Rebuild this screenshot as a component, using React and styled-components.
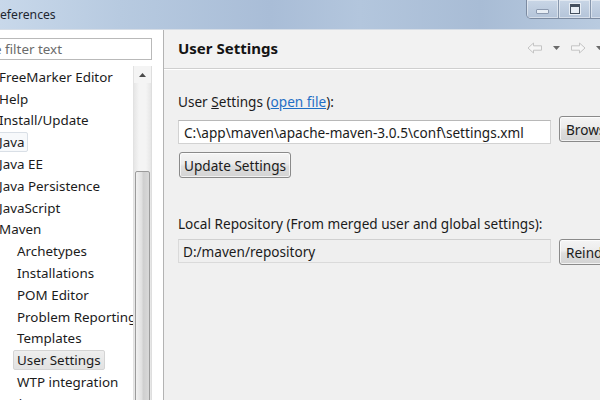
import React from "react";
import styled, { createGlobalStyle } from "styled-components";

const GlobalStyle = createGlobalStyle`
  html, body {
    margin: 0;
    padding: 0;
    overflow: hidden;
  }
  body {
    font-family: "Noto Sans", "Open Sans", sans-serif;
    font-size: 13.6px;
    color: #1b1b1b;
  }
`;

const Window = styled.div`
  width: 600px;
  height: 400px;
  display: flex;
  flex-direction: column;
  overflow: hidden;
  background: #f0f0f0;
`;

const TitleBar = styled.div`
  height: 29px;
  flex: 0 0 29px;
  display: flex;
  align-items: flex-start;
  justify-content: space-between;
  background: linear-gradient(
    90deg,
    #c8d8ea 0%,
    #b7cae0 20%,
    #a9bdd7 45%,
    #b3c6dd 60%,
    #a8bcd5 80%,
    #b9cbe0 100%
  );
  border-bottom: 1px solid #d6dde6;
`;

const Title = styled.span`
  margin-top: 6px;
  font-size: 12.2px;
  color: #1e2630;
`;

const Controls = styled.div`
  display: flex;
  margin-right: -12px;
  height: 18px;
  border: 1px solid #7c8ba1;
  border-top: none;
  border-radius: 0 0 5px 5px;
  overflow: hidden;
  background: linear-gradient(180deg, #c9d6e6 0%, #b4c4d9 100%);
`;

const ControlButton = styled.div`
  width: ${(p) => p.$w}px;
  height: 18px;
  display: flex;
  align-items: center;
  justify-content: center;
  border-left: ${(p) => (p.$first ? "none" : "1px solid #8797ad")};
  box-shadow: inset 0 0 0 1px rgba(255, 255, 255, 0.45);
`;

const MinGlyph = styled.div`
  width: 11px;
  height: 3px;
  margin-top: 4px;
  background: #e8eef5;
  border: 1px solid #8c9ab0;
  border-radius: 1px;
`;

const MaxGlyph = styled.div`
  width: 8px;
  height: 6px;
  border: 1px solid #44505f;
  border-top-width: 3px;
  background: #e8eef5;
  box-shadow: 0 0 0 1px #e8eef5;
`;

const Body = styled.div`
  flex: 1;
  display: flex;
  min-height: 0;
`;

const Sidebar = styled.div`
  width: 163px;
  flex: 0 0 163px;
  background: #ffffff;
  display: flex;
  flex-direction: column;
  padding-top: 8px;
  box-sizing: border-box;
  font-size: 13.4px;
`;

const Filter = styled.div`
  height: 22px;
  margin-left: -3px;
  margin-right: 11px;
  border: 1px solid #b9b9b9;
  box-sizing: border-box;
  display: flex;
  align-items: center;
  overflow: hidden;
  color: #6b6b6b;
  white-space: nowrap;
`;

const FilterText = styled.span`
  margin-left: -4px;
`;

const TreeBox = styled.div`
  flex: 1;
  margin-top: 6px;
  margin-right: 11px;
  display: flex;
  min-height: 0;
  overflow: hidden;
  border-right: 1px solid #dedede;
`;

const TreeList = styled.div`
  flex: 1;
  min-width: 0;
  overflow: hidden;
`;

const Row = styled.div`
  height: 21.8px;
  display: flex;
  align-items: center;
  padding-left: ${(p) => (p.$child ? 13 : 0)}px;
  margin-left: ${(p) => (p.$child ? 0 : -5)}px;
  white-space: nowrap;
`;

const ItemLabel = styled.span`
  display: inline-block;
  height: 20px;
  line-height: 19px;
  padding: 0 3px;
  box-sizing: border-box;
  border: 1px solid
    ${(p) =>
      p.$state === "selected"
        ? "#d4d4d4"
        : p.$state === "focus"
        ? "#d9dfe6"
        : "transparent"};
  border-radius: 2px;
  background: ${(p) =>
    p.$state === "selected"
      ? "linear-gradient(180deg, #eeeeee 0%, #e2e2e2 100%)"
      : p.$state === "focus"
      ? "#f7f9fb"
      : "transparent"};
`;

const Scrollbar = styled.div`
  width: 17px;
  flex: 0 0 17px;
  display: flex;
  flex-direction: column;
  background: linear-gradient(90deg, #e6e6e6 0%, #f4f4f4 30%, #f4f4f4 70%, #e6e6e6 100%);
  border-left: 1px solid #e2e2e2;
`;

const ScrollButton = styled.div`
  height: 17px;
  flex: 0 0 17px;
  display: flex;
  align-items: center;
  justify-content: center;
  background: #f4f4f4;
`;

const ScrollTrack = styled.div`
  flex: 1;
  padding-top: 88px;
  display: flex;
  justify-content: center;
`;

const Thumb = styled.div`
  width: 15px;
  height: 400px;
  border: 1px solid #9b9b9b;
  border-radius: 2px;
  box-sizing: border-box;
  background: linear-gradient(90deg, #f1f1f1 0%, #e0e0e0 45%, #cfcfcf 55%, #d9d9d9 100%);
`;

const Main = styled.div`
  flex: 1;
  min-width: 0;
  display: flex;
  flex-direction: column;
  border-left: 1px solid #b3b3b3;
  overflow: hidden;
`;

const Header = styled.div`
  height: 38px;
  flex: 0 0 38px;
  display: flex;
  align-items: center;
  justify-content: space-between;
  padding-left: 14px;
  background: #f2f2f2;
  border-bottom: 1px solid #cfcfcf;
  box-shadow: 0 1px 0 #ffffff;
`;

const HeaderTitle = styled.span`
  font-weight: bold;
  font-size: 15px;
  color: #141414;
  margin-top: -2px;
`;

const Nav = styled.div`
  display: flex;
  align-items: center;
  gap: 10px;
  margin-right: -3px;
  margin-top: -2px;
`;

const Content = styled.div`
  flex: 1;
  padding: 24px 0 0 14px;
  display: flex;
  flex-direction: column;
  align-items: flex-start;
`;

const Label = styled.div`
  height: 18px;
  line-height: 18px;
  margin-top: ${(p) => p.$gap || 0}px;
  white-space: nowrap;
`;

const Link = styled.span`
  color: #1f6fc5;
  text-decoration: underline;
`;

const Mnemonic = styled.span`
  text-decoration: underline;
`;

const FieldRow = styled.div`
  display: grid;
  grid-template-columns: 373px 90px;
  column-gap: 8px;
  align-items: start;
  margin-top: ${(p) => p.$gap}px;
`;

const TextField = styled.div`
  height: 24px;
  margin-top: ${(p) => p.$offset || 0}px;
  box-sizing: border-box;
  border: 1px solid ${(p) => (p.$readOnly ? "#dadada" : "#d2d2d2")};
  border-top-color: ${(p) => (p.$readOnly ? "#d0d0d0" : "#b8b8b8")};
  background: ${(p) => (p.$readOnly ? "#efefef" : "#ffffff")};
  display: flex;
  align-items: center;
  padding-left: ${(p) => (p.$readOnly ? 4 : 5)}px;
  white-space: nowrap;
  overflow: hidden;
`;

const Button = styled.div`
  height: 26px;
  box-sizing: border-box;
  padding: 0 ${(p) => p.$pad ?? 6}px;
  display: inline-flex;
  align-items: center;
  border: 1px solid #8a8a8a;
  border-radius: 3px;
  background: linear-gradient(180deg, #f4f4f4 0%, #ececec 45%, #dedede 55%, #d3d3d3 100%);
  box-shadow: inset 0 0 0 1px rgba(255, 255, 255, 0.7);
  white-space: nowrap;
  margin-top: ${(p) => p.$gap || 0}px;
  margin-left: ${(p) => p.$indent || 0}px;
`;

const BackArrow = () => (
  <svg width="16" height="12" viewBox="0 0 16 12">
    <path
      d="M1 6 L6.5 1 L6.5 3.8 L14.5 3.8 L14.5 8.2 L6.5 8.2 L6.5 11 Z"
      fill="#f6f6f6"
      stroke="#c4c4c4"
      strokeWidth="1"
      strokeLinejoin="round"
    />
  </svg>
);

const ForwardArrow = () => (
  <svg width="16" height="12" viewBox="0 0 16 12">
    <path
      d="M15 6 L9.5 1 L9.5 3.8 L1.5 3.8 L1.5 8.2 L9.5 8.2 L9.5 11 Z"
      fill="#f6f6f6"
      stroke="#c4c4c4"
      strokeWidth="1"
      strokeLinejoin="round"
    />
  </svg>
);

const DropTriangle = () => (
  <svg width="7" height="4" viewBox="0 0 7 4">
    <path d="M0 0 L7 0 L3.5 4 Z" fill="#6a6a6a" />
  </svg>
);

const UpTriangle = () => (
  <svg width="7" height="4" viewBox="0 0 7 4">
    <path d="M0 4 L7 4 L3.5 0 Z" fill="#4a4a4a" />
  </svg>
);

const treeItems = [
  { label: "FreeMarker Editor" },
  { label: "Help" },
  { label: "Install/Update" },
  { label: "Java", state: "focus" },
  { label: "Java EE" },
  { label: "Java Persistence" },
  { label: "JavaScript" },
  { label: "Maven" },
  { label: "Archetypes", child: true },
  { label: "Installations", child: true },
  { label: "POM Editor", child: true },
  { label: "Problem Reporting", child: true },
  { label: "Templates", child: true },
  { label: "User Settings", child: true, state: "selected" },
  { label: "WTP integration", child: true },
  { label: "Web" },
];

const App = () => {
  return (
    <Window>
      <GlobalStyle />
      <TitleBar>
        <Title>eferences</Title>
        <Controls>
          <ControlButton $w={31} $first>
            <MinGlyph />
          </ControlButton>
          <ControlButton $w={31}>
            <MaxGlyph />
          </ControlButton>
          <ControlButton $w={20} />
        </Controls>
      </TitleBar>

      <Body>
        {/* Preference tree */}
        <Sidebar>
          <Filter>
            <FilterText>e filter text</FilterText>
          </Filter>
          <TreeBox>
            <TreeList>
              {treeItems.map((item, index) => (
                <Row key={index} $child={item.child}>
                  <ItemLabel $state={item.state}>{item.label}</ItemLabel>
                </Row>
              ))}
            </TreeList>
            <Scrollbar>
              <ScrollButton>
                <UpTriangle />
              </ScrollButton>
              <ScrollTrack>
                <Thumb />
              </ScrollTrack>
            </Scrollbar>
          </TreeBox>
        </Sidebar>

        {/* Settings page */}
        <Main>
          <Header>
            <HeaderTitle>User Settings</HeaderTitle>
            <Nav>
              <BackArrow />
              <DropTriangle />
              <ForwardArrow />
              <DropTriangle />
            </Nav>
          </Header>
          <Content>
            <Label>
              User <Mnemonic>S</Mnemonic>ettings (<Link>open file</Link>):
            </Label>
            <FieldRow $gap={5}>
              <TextField $offset={4}>
                C:\app\maven\apache-maven-3.0.5\conf\settings.xml
              </TextField>
              <Button>Browse...</Button>
            </FieldRow>
            <Button $gap={8} $indent={1} $pad={4}>
              Update Settings
            </Button>
            <Label $gap={37}>
              Local Repository (From merged user and global settings):
            </Label>
            <FieldRow $gap={6}>
              <TextField $readOnly>D:/maven/repository</TextField>
              <Button>Reindex</Button>
            </FieldRow>
          </Content>
        </Main>
      </Body>
    </Window>
  );
};

export default App;
